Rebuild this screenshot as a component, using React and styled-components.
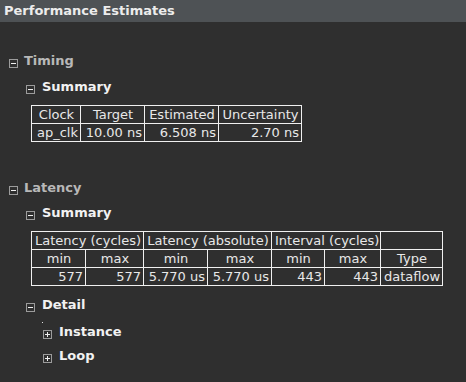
import React from "react";
import styled, { createGlobalStyle } from "styled-components";

const Global = createGlobalStyle`
  html, body { margin: 0; padding: 0; background: #2f2f2f; }
  body { font-family: "DejaVu Sans", sans-serif; width: 466px; height: 382px; overflow: hidden; }
`;

const Page = styled.div`
  width: 466px;
  height: 382px;
  background: #2f2f2f;
  color: #e6e6e6;
`;

const Header = styled.div`
  height: 22px;
  background: #4e5255;
  color: #ececec;
  font-weight: bold;
  font-size: 13px;
  line-height: 22px;
  padding-left: 4px;
`;

const Body = styled.div`
  display: flex;
  flex-direction: column;
  align-items: flex-start;
  padding-top: ${(p) => p.$top}px;
`;

const Row = styled.div`
  display: flex;
  align-items: center;
  height: 16px;
  padding-left: ${(p) => p.$indent}px;
  margin-top: ${(p) => p.$mt || 0}px;
  gap: ${(p) => p.$gap || 7}px;
`;

const Label = styled.span`
  font-size: 13px;
  font-weight: bold;
  color: ${(p) => (p.$dim ? "#b8b8b8" : "#f2f2f2")};
  line-height: 16px;
  position: relative;
  top: -2px;
`;

const Box = styled.span`
  position: relative;
  box-sizing: border-box;
  width: 9px;
  height: 9px;
  border: 1px solid #9c9c9c;
  flex: none;
  &::before {
    content: "";
    position: absolute;
    left: 1px;
    top: 3px;
    width: 5px;
    height: 1px;
    background: #f0f0f0;
  }
  &::after {
    content: "";
    display: ${(p) => (p.$plus ? "block" : "none")};
    position: absolute;
    left: 3px;
    top: 1px;
    width: 1px;
    height: 5px;
    background: #f0f0f0;
  }
`;

const Table = styled.table`
  border-collapse: collapse;
  margin-left: 31px;
  margin-top: ${(p) => p.$mt}px;
  font-size: 13px;
  color: #e8e8e8;
  table-layout: fixed;
  width: ${(p) => p.$w}px;
`;

const Col = styled.col`
  width: ${(p) => p.$w}px;
`;

const Cell = styled.td`
  border: 1px solid #f0f0f0;
  height: 17px;
  padding: 0 2px 0 3px;
  line-height: 17px;
  white-space: nowrap;
  overflow: hidden;
  text-align: ${(p) => p.$align || "center"};
`;

const Dot = styled.div`
  width: 1px;
  height: 1px;
  background: #e0e0e0;
  margin-left: 42px;
  margin-top: 7px;
`;

function Toggle({ indent, mt, plus, dim, children, gap }) {
  return (
    <Row $indent={indent} $mt={mt} $gap={gap}>
      <Box $plus={plus} />
      <Label $dim={dim}>{children}</Label>
    </Row>
  );
}

export default function App() {
  return (
    <Page>
      <Global />
      <Header>Performance Estimates</Header>
      <Body $top={33}>
        <Toggle indent={9} dim gap={6}>Timing</Toggle>
        <Toggle indent={26} mt={10}>Summary</Toggle>
        <Table $mt={8} $w={271}>
          <colgroup>
            <Col $w={49} />
            <Col $w={64} />
            <Col $w={74} />
            <Col $w={83} />
          </colgroup>
          <tbody>
            <tr>
              <Cell>Clock</Cell>
              <Cell>Target</Cell>
              <Cell>Estimated</Cell>
              <Cell>Uncertainty</Cell>
            </tr>
            <tr>
              <Cell $align="right">ap_clk</Cell>
              <Cell $align="right">10.00 ns</Cell>
              <Cell $align="right">6.508 ns</Cell>
              <Cell $align="right">2.70 ns</Cell>
            </tr>
          </tbody>
        </Table>
        <Toggle indent={9} mt={40} dim gap={6}>Latency</Toggle>
        <Toggle indent={26} mt={9}>Summary</Toggle>
        <Table $mt={8} $w={412}>
          <colgroup>
            <Col $w={54} />
            <Col $w={58} />
            <Col $w={64} />
            <Col $w={64} />
            <Col $w={53} />
            <Col $w={56} />
            <Col $w={62} />
          </colgroup>
          <tbody>
            <tr>
              <Cell colSpan={2}>Latency (cycles)</Cell>
              <Cell colSpan={2}>Latency (absolute)</Cell>
              <Cell colSpan={2}>Interval (cycles)</Cell>
              <Cell></Cell>
            </tr>
            <tr>
              <Cell>min</Cell>
              <Cell>max</Cell>
              <Cell>min</Cell>
              <Cell>max</Cell>
              <Cell>min</Cell>
              <Cell>max</Cell>
              <Cell>Type</Cell>
            </tr>
            <tr>
              <Cell $align="right">577</Cell>
              <Cell $align="right">577</Cell>
              <Cell $align="right">5.770 us</Cell>
              <Cell $align="right">5.770 us</Cell>
              <Cell $align="right">443</Cell>
              <Cell $align="right">443</Cell>
              <Cell $align="right">dataflow</Cell>
            </tr>
          </tbody>
        </Table>
        <Toggle indent={26} mt={13}>Detail</Toggle>
        <Dot />
        <Toggle indent={43} mt={3} plus>Instance</Toggle>
        <Toggle indent={43} mt={8} plus>Loop</Toggle>
      </Body>
    </Page>
  );
}
